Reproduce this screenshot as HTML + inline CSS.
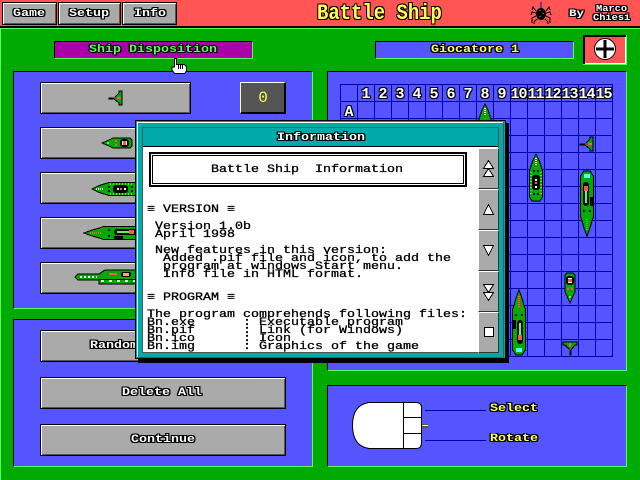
<!DOCTYPE html>
<html>
<head>
<meta charset="utf-8">
<title>Battle Ship</title>
<style>
html,body{margin:0;padding:0;background:#00AA00;}
#s{position:relative;width:640px;height:480px;overflow:hidden;background:#00AA00;font-family:"Liberation Mono",monospace;}
#s div{position:absolute;box-sizing:border-box;}
.t{white-space:pre;font-size:11px;line-height:10px;transform-origin:0 0;transform:scaleX(1.2121);font-weight:bold;}
.o{color:#fff;text-shadow:1px 0 #000,-1px 0 #000,0 1px #000,0 -1px #000,1px 1px #000,-1px -1px #000,1px -1px #000,-1px 1px #000;}
.y{color:#FFFF55;text-shadow:1px 0 #000,-1px 0 #000,0 1px #000,0 -1px #000,1px 1px #000,-1px -1px #000,1px -1px #000,-1px 1px #000;}
.g{color:#55FF55;text-shadow:1px 0 #000,-1px 0 #000,0 1px #000,0 -1px #000,1px 1px #000,-1px -1px #000;}
.b{color:#000;font-weight:normal;-webkit-text-stroke:.3px #000;}
.btn{background:#AAAAAA;border:1px solid #000;box-shadow:inset 1px 1px 0 #fff,inset -1px -1px 0 #555;}
.panel{background:#5555FF;border-top:1px solid #000;border-left:1px solid #000;border-right:1px solid #55FF55;border-bottom:1px solid #55FF55;}
.n{font-size:15px;line-height:15px;font-weight:bold;width:17px;text-align:center;letter-spacing:-1px;}
.sb{left:478px;width:21px;background:#AAAAAA;border-top:1px solid #fff;border-left:1px solid #fff;border-right:1px solid #333;border-bottom:1px solid #333;}
</style>
</head>
<body>
<div id="s">
<!-- top bar -->
<div style="left:0;top:0;width:640px;height:26px;background:#FF5555"></div>
<div style="left:0;top:26px;width:640px;height:2px;background:#000"></div>
<div style="left:0;top:28px;width:640px;height:1px;background:#55FF55"></div>
<div style="left:0;top:28px;width:1px;height:452px;background:#55FF55"></div>
<div class="btn" style="left:2px;top:2px;width:55px;height:23px"></div>
<div class="btn" style="left:58px;top:2px;width:63px;height:23px"></div>
<div class="btn" style="left:122px;top:2px;width:55px;height:23px"></div>
<div class="t o" style="left:13px;top:9px">Game</div>
<div class="t o" style="left:69px;top:9px">Setup</div>
<div class="t o" style="left:134px;top:9px">Info</div>
<div class="t y" style="left:317px;top:1px;font-size:22px;line-height:26px;font-weight:bold;transform:scaleX(.86)">Battle Ship</div>
<div class="t o" style="left:569px;top:10px;font-size:10px;transform:scaleX(1.25)">By</div>
<div class="t o" style="left:596px;top:5px;font-size:9px;line-height:9px;transform:scaleX(1.15)">Marco</div>
<div class="t o" style="left:593px;top:14px;font-size:9px;line-height:9px;transform:scaleX(1.15)">Chiesi</div>
<svg style="position:absolute;left:530px;top:2px" width="22" height="24" viewBox="0 0 22 24" shape-rendering="crispEdges">
<path d="M11 0V8" stroke="#0000AA" stroke-width="1"/>
<ellipse cx="11" cy="12" rx="5" ry="6" fill="#000"/>
<path d="M6 9L3 5L2 8M6 11L2 10L1 13M6 14L2 16L2 21M7 17L4 20L4 22M16 9L19 5L20 8M16 11L20 10L21 13M16 14L20 16L20 21M15 17L18 20L18 22" stroke="#000" stroke-width="1" fill="none"/>
<path d="M9 8h2v1h-2zM12 11h2v1h-2zM9 14h2v1h-2z" fill="#555"/>
</svg>

<!-- header bars -->
<div style="left:54px;top:41px;width:199px;height:18px;background:#AA00AA;border-top:1px solid #000;border-left:1px solid #000;border-right:1px solid #55FF55;border-bottom:1px solid #55FF55"></div>
<div class="t g" style="left:89px;top:45px">Ship Disposition</div>
<div style="left:375px;top:41px;width:199px;height:18px;background:#5555FF;border-top:1px solid #000;border-left:1px solid #000;border-right:1px solid #55FF55;border-bottom:1px solid #55FF55"></div>
<div class="t y" style="left:431px;top:45px">Giocatore 1</div>

<!-- flag (neutral crosshair emblem) -->
<div style="left:583px;top:35px;width:43px;height:29px;background:#000"></div>
<div style="left:585px;top:37px;width:41px;height:27px;background:#FF5555;border-right:1px solid #fff;border-bottom:1px solid #fff"></div>
<svg style="position:absolute;left:593px;top:37px" width="24" height="24" viewBox="0 0 24 24">
<circle cx="12" cy="12" r="10.5" fill="#fff" stroke="#000" stroke-width="1"/>
<path d="M12 3V21M3 12H21" stroke="#000" stroke-width="3"/>
</svg>
<div style="left:583px;top:64px;width:44px;height:1px;background:#55FF55"></div>
<div style="left:626px;top:35px;width:1px;height:30px;background:#55FF55"></div>

<!-- panels -->
<div class="panel" style="left:13px;top:71px;width:300px;height:238px"></div>
<div class="panel" style="left:13px;top:319px;width:300px;height:148px"></div>
<div class="panel" style="left:327px;top:71px;width:300px;height:300px"></div>
<div class="panel" style="left:327px;top:385px;width:300px;height:82px"></div>

<!-- left ship buttons -->
<div class="btn" style="left:40px;top:82px;width:151px;height:32px"></div>
<div style="left:240px;top:82px;width:46px;height:32px;background:#555;border-top:1px solid #fff;border-left:1px solid #fff;border-right:2px solid #000;border-bottom:2px solid #000"></div>
<div style="left:258px;top:90px;font-size:16px;line-height:16px;color:#FFFF55;width:10px;text-align:center">0</div>
<div class="btn" style="left:40px;top:127px;width:246px;height:32px"></div>
<div class="btn" style="left:40px;top:172px;width:246px;height:32px"></div>
<div class="btn" style="left:40px;top:217px;width:246px;height:32px"></div>
<div class="btn" style="left:40px;top:262px;width:246px;height:32px"></div>
<div class="btn" style="left:40px;top:330px;width:246px;height:32px"></div>
<div class="btn" style="left:40px;top:377px;width:246px;height:32px"></div>
<div class="btn" style="left:40px;top:424px;width:246px;height:32px"></div>
<div class="t o" style="left:90px;top:341px">Random Disposition</div>
<div class="t o" style="left:122px;top:388px">Delete All</div>
<div class="t o" style="left:131px;top:435px">Continue</div>

<!-- grid -->
<div style="left:340px;top:84px;width:273px;height:273px;background-image:linear-gradient(#0000AA 1px,transparent 1px),linear-gradient(90deg,#0000AA 1px,transparent 1px);background-size:17px 17px"></div>
<div class="n o" style="left:357px;top:87px">1</div>
<div class="n o" style="left:374px;top:87px">2</div>
<div class="n o" style="left:391px;top:87px">3</div>
<div class="n o" style="left:408px;top:87px">4</div>
<div class="n o" style="left:425px;top:87px">5</div>
<div class="n o" style="left:442px;top:87px">6</div>
<div class="n o" style="left:459px;top:87px">7</div>
<div class="n o" style="left:476px;top:87px">8</div>
<div class="n o" style="left:493px;top:87px">9</div>
<div class="n o" style="left:510px;top:87px">10</div>
<div class="n o" style="left:527px;top:87px">11</div>
<div class="n o" style="left:544px;top:87px">12</div>
<div class="n o" style="left:561px;top:87px">13</div>
<div class="n o" style="left:578px;top:87px">14</div>
<div class="n o" style="left:595px;top:87px">15</div>
<div class="n o" style="left:340px;top:105px">A</div>

<!-- ships -->
<svg style="position:absolute;left:0;top:0" width="640" height="480" viewBox="0 0 640 480" shape-rendering="crispEdges">
<defs>
<g id="jet"><path d="M0 7H5L10 2V0H13V14H10V12L5 8H0Z" fill="#00AA00" stroke="#000" stroke-width="1"/><rect x="5" y="6" width="4" height="2" fill="#555"/><rect x="8" y="6" width="4" height="2" fill="#FF5555"/></g>
<g id="s2"><path d="M1 6L8 3L12 1H29L31 3V9L29 11H12L8 9Z" fill="#00AA00" stroke="#000" stroke-width="1"/><rect x="19" y="2" width="9" height="8" rx="3" fill="#000"/><rect x="21" y="4" width="5" height="4" fill="#fff"/><rect x="22" y="4" width="3" height="4" fill="#FF5555"/><rect x="14" y="3" width="2" height="2" fill="#FF5555"/><rect x="14" y="7" width="2" height="2" fill="#FF5555"/><rect x="6" y="5" width="2" height="2" fill="#55FF55"/></g>
<g id="s3"><path d="M0 7L6 4L12 2L17 0.500H43L47 3V11L43 13.500H17L12 12L6 10Z" fill="#00AA00" stroke="#000" stroke-width="1"/><rect x="21" y="3" width="15" height="8" rx="3" fill="#000"/><rect x="25" y="6" width="2" height="2" fill="#FFFF55"/><rect x="28" y="6" width="2" height="2" fill="#FF5555"/><rect x="32" y="6" width="2" height="2" fill="#fff"/><path d="M4 7H12" stroke="#fff" stroke-width="2" stroke-dasharray="1 1"/><path d="M18 2H42M18 12H42" stroke="#FFFF55" stroke-dasharray="1 2"/><rect x="16" y="4" width="2" height="2" fill="#000"/><rect x="16" y="8" width="2" height="2" fill="#000"/><rect x="39" y="4" width="2" height="2" fill="#000"/><rect x="39" y="8" width="2" height="2" fill="#000"/></g>
<g id="s4"><path d="M0 7L8 4L17 1.500L19 0.500H60L65 4V10L60 13.500H19L17 12.500L8 10Z" fill="#00AA00" stroke="#000" stroke-width="1"/><path d="M6 7H18" stroke="#FF5555" stroke-width="2" stroke-dasharray="1 1"/><rect x="30" y="3" width="24" height="6" rx="3" fill="#000"/><rect x="33" y="5" width="14" height="2" fill="#55FF55"/><rect x="45" y="4" width="5" height="4" fill="#FF5555"/><rect x="30" y="10" width="9" height="3" fill="#000"/><rect x="24" y="3" width="2" height="2" fill="#000"/><rect x="24" y="9" width="2" height="2" fill="#000"/><rect x="58" y="4" width="4" height="6" fill="#55FFFF"/></g>
<g id="s5"><path d="M0 7L3 4H24L30 0H70V14H24V10H3Z" fill="#00AA00" stroke="#000" stroke-width="1"/><path d="M5 7H22" stroke="#fff" stroke-width="2" stroke-dasharray="2 2"/><path d="M26 11H68" stroke="#fff" stroke-width="2" stroke-dasharray="3 5"/><path d="M24 9.500H70" stroke="#000"/><rect x="34" y="3" width="8" height="2" fill="#FF5555"/><rect x="46" y="2" width="10" height="5" rx="2" fill="#000"/><rect x="48" y="3" width="6" height="3" fill="#FFAA55"/></g>
</defs>
<use href="#jet" x="109" y="91"/>
<use href="#s2" x="101" y="137"/>
<use href="#s3" x="92" y="182"/>
<use href="#s4" x="84" y="226"/>
<use href="#s5" x="75" y="270"/>
<use href="#jet" x="580" y="137"/>
<use href="#s3" transform="translate(492,104) rotate(90)"/>
<use href="#s3" transform="translate(543,154) rotate(90)"/>
<use href="#s4" transform="translate(580,236) rotate(-90)"/>
<use href="#s2" transform="translate(564,304) rotate(-90)"/>
<use href="#s4" transform="translate(526,290) rotate(90)"/>
<use href="#jet" transform="translate(563,355) rotate(-90)"/>
</svg>

<!-- mouse -->
<svg style="position:absolute;left:345px;top:395px" width="200" height="62" viewBox="345 395 200 62">
<path d="M369 402.500H416Q421.500 402.500 421.500 408V443Q421.500 448.500 416 448.500H369Q352.500 446 352.500 425.500Q352.500 405 369 402.500Z" fill="#fff" stroke="#000"/>
<path d="M403.500 403V448M403.500 417.500H421M403.500 433.500H421" stroke="#000"/>
<rect x="422" y="424" width="6" height="4" fill="#555"/>
<path d="M422 425.500H428" stroke="#fff"/>
<path d="M425 410.500H486M425 440.500H486" stroke="#0000AA"/>
</svg>
<div class="t y" style="left:490px;top:404px">Select</div>
<div class="t y" style="left:490px;top:434px">Rotate</div>

<!-- hand cursor -->
<svg style="position:absolute;left:170px;top:57px" width="20" height="18" viewBox="170 57 20 18">
<path d="M174.500 58.500H176.500V64.500H183.500Q186.500 65 186.500 68V71L184.500 73.500H174.500L172 70V67H174.500Z" fill="#fff" stroke="#000"/>
<path d="M178.500 65V69M180.500 65V69M182.500 65V69" stroke="#000"/>
</svg>

<!-- dialog -->
<div style="left:138px;top:123px;width:371px;height:240px;background:#000"></div>
<div style="left:135px;top:120px;width:371px;height:239px;background:#00AAAA;border:1px solid #000"></div>
<div style="left:137px;top:122px;width:1px;height:235px;background:#fff"></div>
<div style="left:137px;top:122px;width:367px;height:1px;background:#fff"></div>
<div style="left:503px;top:122px;width:1px;height:235px;background:#555"></div>
<div style="left:137px;top:357px;width:367px;height:1px;background:#555"></div>
<div style="left:142px;top:127px;width:357px;height:226px;background:#fff;border:1px solid #555"></div>
<div style="left:143px;top:128px;width:355px;height:19px;background:#00AAAA;border-bottom:1px solid #000"></div>
<div class="t o" style="left:277px;top:133px">Information</div>

<div style="left:149px;top:152px;width:318px;height:35px;border:2px solid #000"></div>
<div style="left:152px;top:155px;width:312px;height:29px;border:1px solid #000"></div>
<div class="t b" style="left:211px;top:165px">Battle Ship  Information</div>
<div class="t b" style="left:147px;top:205px">≡ VERSION ≡</div>
<div class="t b" style="left:155px;top:222px">Version 1.0b</div>
<div class="t b" style="left:155px;top:230px">April 1998</div>
<div class="t b" style="left:155px;top:246px">New features in this version:</div>
<div class="t b" style="left:163px;top:254px">Added .pif file and icon, to add the</div>
<div class="t b" style="left:163px;top:262px">program at windows Start menu.</div>
<div class="t b" style="left:163px;top:270px">Info file in HTML format.</div>
<div class="t b" style="left:147px;top:293px">≡ PROGRAM ≡</div>
<div class="t b" style="left:147px;top:310px">The program comprehends following files:</div>
<div class="t b" style="left:147px;top:318px">Bn.exe</div><div class="t b" style="left:243px;top:318px">:</div><div class="t b" style="left:259px;top:318px">Executable program</div>
<div class="t b" style="left:147px;top:326px">Bn.pif</div><div class="t b" style="left:243px;top:326px">:</div><div class="t b" style="left:259px;top:326px">Link (for Windows)</div>
<div class="t b" style="left:147px;top:334px">Bn.ico</div><div class="t b" style="left:243px;top:334px">:</div><div class="t b" style="left:259px;top:334px">Icon</div>
<div class="t b" style="left:147px;top:342px">Bn.img</div><div class="t b" style="left:243px;top:342px">:</div><div class="t b" style="left:259px;top:342px">Graphics of the game</div>

<!-- scroll buttons -->
<div class="sb" style="top:148px;height:41px"></div>
<div class="sb" style="top:189px;height:41px"></div>
<div class="sb" style="top:230px;height:41px"></div>
<div class="sb" style="top:271px;height:41px"></div>
<div class="sb" style="top:312px;height:41px"></div>
<svg style="position:absolute;left:478px;top:148px" width="21" height="205" viewBox="478 148 21 205" shape-rendering="crispEdges">
<g fill="#fff" stroke="#000">
<path d="M488.500 160.500L493.500 168.500H483.500Z"/><path d="M488.500 168.500L493.500 176.500H483.500Z"/>
<path d="M488.500 204.500L493.500 214.500H483.500Z"/>
<path d="M483.500 245.500H493.500L488.500 255.500Z"/>
<path d="M483.500 284.500H493.500L488.500 292.500Z"/><path d="M483.500 292.500H493.500L488.500 300.500Z"/>
<rect x="484.500" y="327.500" width="9" height="9"/>
</g>
</svg>
</div>
</body>
</html>
